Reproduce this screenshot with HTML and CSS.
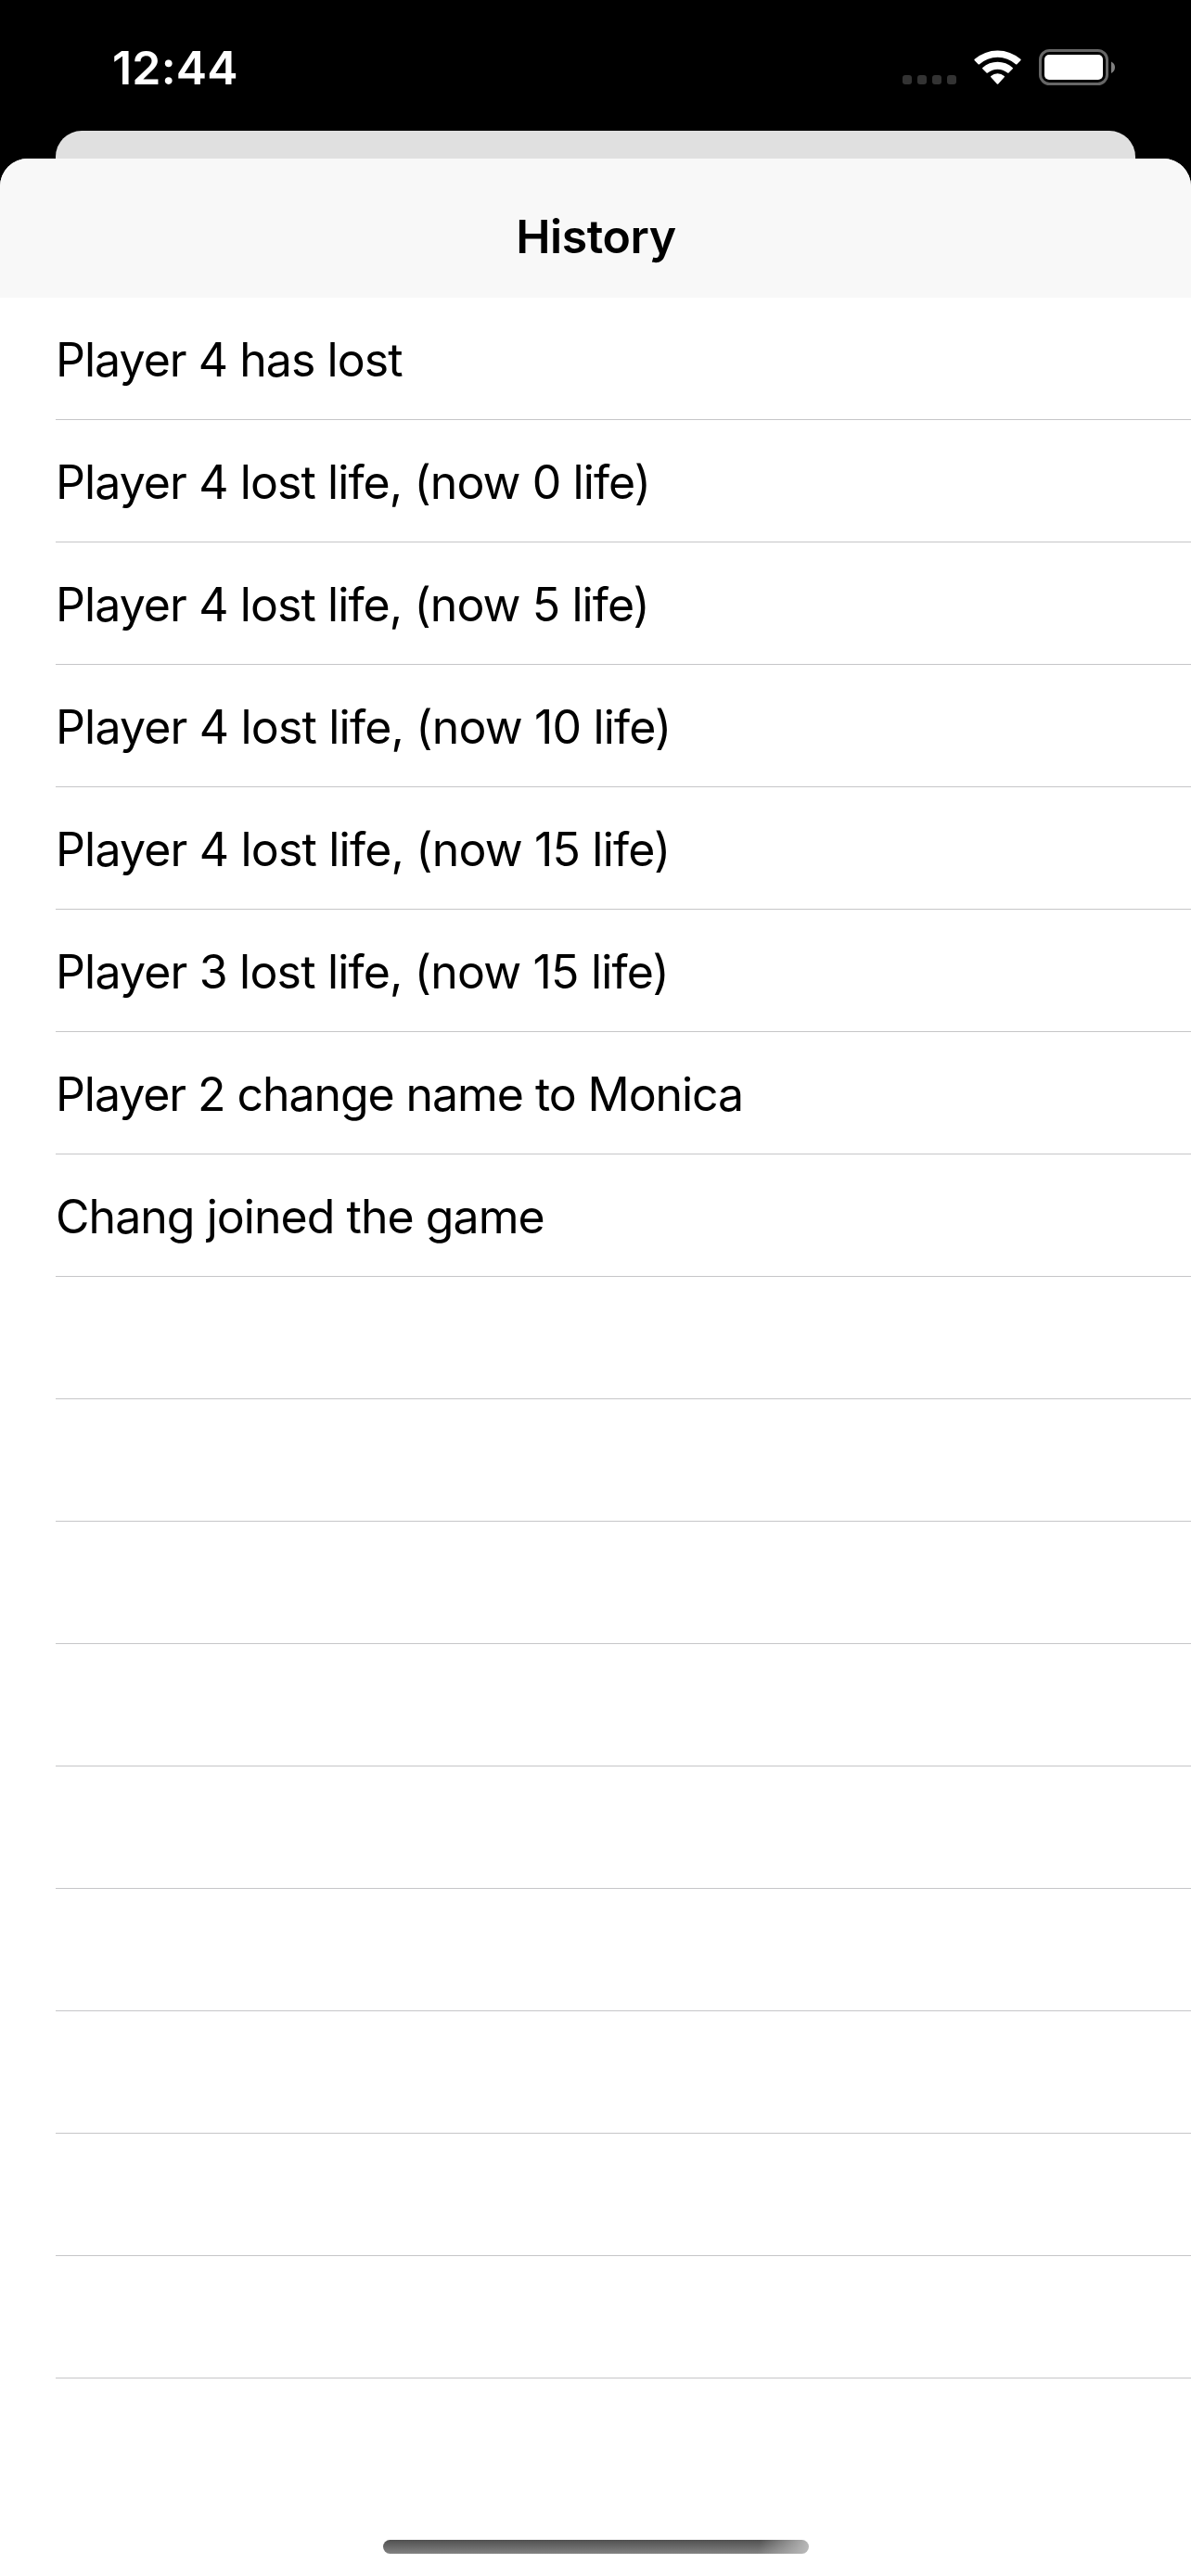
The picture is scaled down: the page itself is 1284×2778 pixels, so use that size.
FILE: index.html
```html
<!DOCTYPE html>
<html lang="en">
<head>
<meta charset="utf-8">
<title>History</title>
<link rel="stylesheet" href="styles.css">
</head>
<body>
<div class="screen">
  <header class="status">
    <span class="time">12:44</span>
    <svg class="indicators" width="232" height="42" viewBox="0 0 232 42" aria-hidden="true">
      <g fill="#333">
        <rect x="1" y="29" width="10" height="10" rx="3"/>
        <rect x="17" y="29" width="10" height="10" rx="3"/>
        <rect x="33" y="29" width="10" height="10" rx="3"/>
        <rect x="49" y="29" width="10" height="10" rx="3"/>
      </g>
      <g fill="#fff">
        <path d="M78.7 13.2Q78 12.5 78.7 11.8A38 38 0 0 1 128.3 11.8Q129 12.5 128.3 13.2L124.4 17.2Q123.7 17.9 123 17.2A29.5 29.5 0 0 0 84 17.2Q83.3 17.9 82.6 17.2Z"/>
        <path d="M87.3 22.3Q86.6 21.6 87.3 20.9A24.5 24.5 0 0 1 119.7 20.9Q120.4 21.6 119.7 22.3L115.5 26.5Q114.8 27.2 114.1 26.5A16.5 16.5 0 0 0 92.9 26.5Q92.2 27.2 91.5 26.5Z"/>
        <path d="M96.3 31.2Q95.6 30.5 96.3 29.9A11.5 11.5 0 0 1 110.7 29.9Q111.4 30.5 110.7 31.2L104.2 38.4Q103.5 39.1 102.8 38.4Z"/>
      </g>
      <rect x="149.5" y="2.5" width="72" height="36" rx="10" fill="none" stroke="#666" stroke-width="3"/>
      <rect x="154" y="7" width="63" height="27" rx="5" fill="#fff"/>
      <path d="M226 14.5Q230 16.5 230 20.5T226 27Z" fill="#808080"/>
    </svg>
  </header>
  <div class="back-card"></div>
  <main class="sheet">
    <h1 class="title">History</h1>
    <ul class="list">
      <li>Player 4 has lost</li>
      <li class="life">Player 4 lost life, (now 0 life)</li>
      <li class="life">Player 4 lost life, (now 5 life)</li>
      <li class="life two-digit">Player 4 lost life, (now 10 life)</li>
      <li class="life two-digit">Player 4 lost life, (now 15 life)</li>
      <li class="life two-digit">Player 3 lost life, (now 15 life)</li>
      <li class="rename">Player 2 change name to Monica</li>
      <li>Chang joined the game</li>
      <li></li>
      <li></li>
      <li></li>
      <li></li>
      <li></li>
      <li></li>
      <li></li>
      <li></li>
      <li></li>
    </ul>
    <div class="home"></div>
  </main>
</div>
</body>
</html>
```
FILE: styles.css
```css
* { box-sizing: border-box; }
body { margin: 0; background: #000; font-family: Inter, "Liberation Sans", sans-serif; }
.screen { width: 1284px; height: 2778px; display: flex; flex-direction: column; overflow: hidden; }

.status { height: 141px; flex: none; display: flex; justify-content: space-between; align-items: flex-start; padding: 52px 80px 0 121px; color: #fff; }
.time { font-size: 50px; line-height: 42px; font-weight: 600; letter-spacing: 0.2px; }
.indicators { display: block; }

.back-card { height: 30px; flex: none; margin: 0 60px; border-radius: 28px 28px 0 0; background: #e0e0e0; }
.sheet { flex: 1; display: flex; flex-direction: column; background: #fff; border-radius: 30px 30px 0 0; overflow: hidden; }
.title { margin: 0; height: 150px; flex: none; background: #f8f8f8; text-align: center; font-size: 50px; line-height: 168px; font-weight: 600; letter-spacing: -0.4px; padding-left: 1px; }

.list { list-style: none; margin: 0; padding: 0 0 0 60px; }
.list li { height: 132px; border-bottom: 1px solid #c6c6c8; font-size: 50px; line-height: 134px; letter-spacing: -0.96px; white-space: nowrap; }
.list .life { letter-spacing: -0.91px; }
.list .two-digit { letter-spacing: -0.82px; }
.list .rename { letter-spacing: -1.07px; }

.home {
  width: 459px;
  height: 15px;
  margin: auto auto 24px 413px;
  border-radius: 8px;
  background: linear-gradient(100deg, transparent 88%, #bbb 100%), linear-gradient(#505050, #828282);
}
```
